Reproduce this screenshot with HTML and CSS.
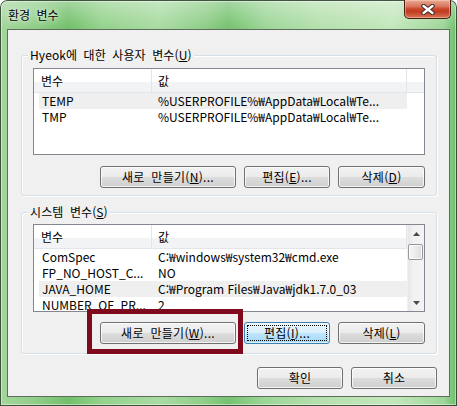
FILE: index.html
```html
<!DOCTYPE html>
<html lang="ko">
<head>
<meta charset="utf-8">
<title>환경 변수</title>
<link rel="stylesheet" href="styles.css">
</head>
<body>
<div class="window">
  <div class="titlebar">
    <span class="title">환경 변수</span>
    <button class="close" aria-label="닫기">
      <svg width="14" height="11" viewBox="0 0 14 11">
        <path d="M2.5 2 L11.5 9 M11.5 2 L2.5 9" stroke="#3a2a26" stroke-width="4.4" stroke-linecap="round"/>
        <path d="M2.5 2 L11.5 9 M11.5 2 L2.5 9" stroke="#ffffff" stroke-width="2.4" stroke-linecap="round"/>
      </svg>
    </button>
  </div>
  <div class="client">
    <section class="group group-user">
      <div class="legend">Hyeok에 대한 사용자 변수(<u>U</u>)</div>
      <div class="listview lv-user">
        <div class="lv-main">
          <div class="lv-header">
            <div class="hc hc1">변수</div>
            <div class="hc hc2">값</div>
          </div>
          <div class="row sel"><span class="c1">TEMP</span><span class="c2">%USERPROFILE%₩AppData₩Local₩Te...</span></div>
          <div class="row"><span class="c1">TMP</span><span class="c2">%USERPROFILE%₩AppData₩Local₩Te...</span></div>
        </div>
        <div class="lv-side">
          <div class="hc hc-fill"></div>
        </div>
      </div>
      <div class="btnrow">
        <button class="btn w-new">새로 만들기(<u>N</u>)...</button>
        <button class="btn w-edit">편집(<u>E</u>)...</button>
        <button class="btn w-del">삭제(<u>D</u>)</button>
      </div>
    </section>

    <section class="group group-sys">
      <div class="legend">시스템 변수(<u>S</u>)</div>
      <div class="listview lv-sys">
        <div class="lv-main">
          <div class="lv-header">
            <div class="hc hc1">변수</div>
            <div class="hc hc2">값</div>
          </div>
          <div class="row"><span class="c1">ComSpec</span><span class="c2">C:₩windows₩system32₩cmd.exe</span></div>
          <div class="row"><span class="c1">FP_NO_HOST_C...</span><span class="c2">NO</span></div>
          <div class="row sel"><span class="c1">JAVA_HOME</span><span class="c2">C:₩Program Files₩Java₩jdk1.7.0_03</span></div>
          <div class="row"><span class="c1">NUMBER_OF_PR...</span><span class="c2">2</span></div>
        </div>
        <div class="scrollbar">
          <div class="sb-btn">
            <svg width="7" height="4" viewBox="0 0 7 4"><path d="M0 4 L3.5 0 L7 4 Z" fill="#4a4a4a"/></svg>
          </div>
          <div class="sb-thumb"></div>
          <div class="sb-track"></div>
          <div class="sb-btn">
            <svg width="7" height="4" viewBox="0 0 7 4"><path d="M0 0 L3.5 4 L7 0 Z" fill="#4a4a4a"/></svg>
          </div>
        </div>
      </div>
      <div class="btnrow">
        <button class="btn w-new">새로 만들기(<u>W</u>)...</button>
        <button class="btn w-edit focused">편집(<u>I</u>)...</button>
        <button class="btn w-del">삭제(<u>L</u>)</button>
      </div>
    </section>

    <div class="btnrow dialog-buttons">
      <button class="btn w-ok">확인</button>
      <button class="btn w-ok">취소</button>
    </div>
  </div>
  <div class="highlight"></div>
</div>
</body>
</html>
```

FILE: styles.css
```css
* { box-sizing: border-box; }
html, body { margin: 0; padding: 0; }
body {
  width: 457px;
  height: 406px;
  overflow: hidden;
  background: #ffffff;
  font-family: "Noto Sans CJK KR", "Liberation Sans", sans-serif;
  font-size: 12px;
  color: #000;
}
.window {
  position: relative;
  width: 457px;
  height: 406px;
  border-radius: 7px 7px 0 0;
  display: flex;
  flex-direction: column;
  background:
    linear-gradient(180deg, rgba(255,255,255,0.35) 0, rgba(255,255,255,0) 28px),
    linear-gradient(90deg, #a4d69c 0%, #8fcd88 8%, #72c06b 15%, #93d28c 22%, #a9dba2 35%, #8ecd87 45%, #76c270 50%, #9cd697 58%, #b5e0ad 70%, #c3e7bc 86%, #9fd699 97%, #6cbd68 100%);
  box-shadow: inset 0 0 0 1px rgba(25,45,25,0.8), inset 0 0 0 2px rgba(255,255,255,0.45);
}
.titlebar {
  height: 29px;
  display: flex;
  align-items: flex-start;
}
.title {
  margin: 7px 0 0 8px;
  line-height: 16px;
  font-size: 12px;
  word-spacing: 3px;
  color: #000;
  text-shadow: 0 0 6px rgba(255,255,255,0.9), 0 0 2px rgba(255,255,255,0.8);
}
.close {
  margin: 0 6px 0 auto;
  width: 47px;
  height: 19px;
  padding: 0;
  border: 1px solid #4a1c14;
  border-top: none;
  border-radius: 0 0 5px 5px;
  background: linear-gradient(180deg, #e9a996 0%, #d9775d 35%, #c9472b 50%, #c23c20 65%, #d77656 100%);
  box-shadow: inset 0 0 0 1px rgba(255,220,200,0.45);
  display: flex;
  align-items: center;
  justify-content: center;
}
.close svg { display: block; margin-top: 1px; }

.client {
  margin: 0 7px;
  width: 443px;
  height: 368px;
  background: #f0f0f0;
  border: 1px solid #5f6e5c;
  padding: 25px 12px 7px 13px;
  display: flex;
  flex-direction: column;
}

.group {
  border: 1px solid #d5dfe5;
  border-radius: 3px;
  box-shadow: inset 1px 1px 0 #ffffff, 1px 1px 0 #ffffff;
  padding: 0 11px 7px 11px;
  display: flex;
  flex-direction: column;
}
.group-user { height: 141px; }
.group-sys { height: 142px; margin-top: 16px; padding-bottom: 9px; }

.legend {
  width: max-content;
  margin: -8px 0 0 -5px;
  padding: 0 2px;
  background: #f0f0f0;
  line-height: 14px;
  height: 14px;
  white-space: nowrap;
  word-spacing: 3px;
  letter-spacing: 0.1px;
}

.listview {
  border: 1px solid #828790;
  background: #ffffff;
  overflow: hidden;
  display: flex;
}
.lv-user { margin-top: 6px; height: 87px; }
.lv-sys { margin-top: 5px; height: 88px; }
.lv-main { width: 373px; display: flex; flex-direction: column; }
.lv-side { width: 17px; }

.lv-header { display: flex; height: 24px; flex-shrink: 0; }
.hc {
  height: 24px;
  background: linear-gradient(180deg, #ffffff 0, #ffffff 55%, #f2f3f5 55%, #f2f3f5 100%);
  border-bottom: 1px solid #e3e5e8;
  border-right: 1px solid #e3e5e8;
  line-height: 23px;
  white-space: nowrap;
}
.hc1 { width: 118px; padding-left: 7px; }
.hc2 { width: 255px; padding-left: 6px; }
.hc-fill { width: 17px; border-right: none; }

.row {
  display: flex;
  margin-left: 5px;
  width: 368px;
  height: 16px;
  line-height: 16px;
  white-space: nowrap;
  flex-shrink: 0;
}
.row.sel { background: #efefef; }
.c1 { width: 113px; padding-left: 3px; overflow: hidden; }
.c2 { padding-left: 6px; overflow: hidden; }

.scrollbar {
  width: 17px;
  display: flex;
  flex-direction: column;
  background: linear-gradient(90deg, #e6e6e6 0, #f1f1f1 30%, #f4f4f4 100%);
  border-left: 1px solid #f0f0f0;
}
.sb-btn {
  height: 17px;
  display: flex;
  align-items: center;
  justify-content: center;
  flex-shrink: 0;
}
.sb-btn svg { display: block; }
.sb-thumb {
  margin: 2px 1px 0 0;
  height: 16px;
  border: 1px solid #979797;
  border-radius: 2px;
  background: linear-gradient(90deg, #f6f6f6 0, #ececec 50%, #dcdcdc 100%);
  box-shadow: inset 0 0 0 1px rgba(255,255,255,0.8);
  flex-shrink: 0;
}
.sb-track { flex: 1; }

.btnrow {
  display: flex;
  justify-content: flex-end;
  gap: 8px;
}
.group-user .btnrow { margin-top: 11px; }
.group-sys .btnrow { margin-top: 10px; }
.dialog-buttons { margin-top: 13px; }

.btn {
  height: 22px;
  padding: 0;
  border: 1px solid #707070;
  border-radius: 3px;
  background: linear-gradient(180deg, #f2f2f2 0, #ebebeb 50%, #dddddd 50%, #cfcfcf 100%);
  box-shadow: inset 0 0 0 1px rgba(255,255,255,0.75);
  font-family: "Noto Sans CJK KR", "Liberation Sans", sans-serif;
  font-size: 12px;
  line-height: 20px;
  word-spacing: 3px;
  letter-spacing: 0.3px;
  color: #000;
  text-align: center;
  white-space: nowrap;
}
.btn u { text-underline-offset: 1px; }
.w-new { width: 136px; }
.w-edit { width: 86px; }
.w-del { width: 87px; }
.w-ok { width: 86px; }
.btn.focused {
  border-color: #3c7fb1;
  background: linear-gradient(180deg, #eaf6fd 0, #d9f0fc 50%, #bee6fd 50%, #a7d9f5 100%);
  box-shadow: inset 0 0 0 1px rgba(255,255,255,0.6);
  outline: 1px dotted #000;
  outline-offset: -4px;
}

.highlight {
  position: absolute;
  left: 87px;
  top: 309px;
  width: 156px;
  height: 45px;
  border: 5px solid #7f0a1d;
}
```
